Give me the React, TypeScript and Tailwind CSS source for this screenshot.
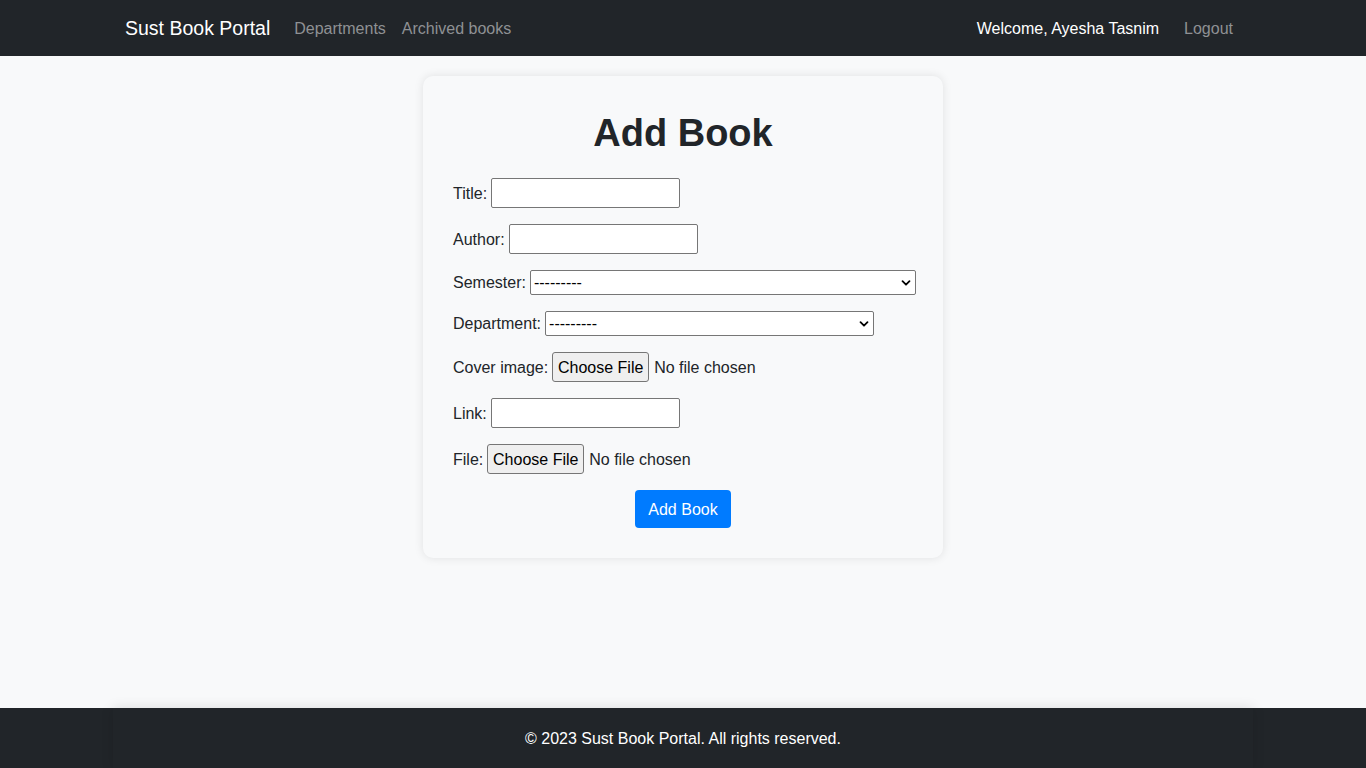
import React from 'react';

const font = { fontFamily: '"Liberation Sans", Arial, sans-serif' };

function ChevronDown() {
  return (
    <svg width="10" height="10" viewBox="0 0 10 10" className="pointer-events-none absolute right-[5px] top-1/2 -translate-y-1/2">
      <path d="M1.5 3.2 L5 6.7 L8.5 3.2" fill="none" stroke="#000" strokeWidth="1.8" strokeLinecap="round" strokeLinejoin="round" />
    </svg>
  );
}

function FilePicker() {
  return (
    <div className="flex items-center">
      <button
        type="button"
        className="h-[30px] w-[97px] pt-px bg-[#efefef] border border-[#767676] rounded-[3px] text-[16px] text-black"
      >
        Choose File
      </button>
      <span className="ml-[5px] pt-px text-[16px] text-[#212529]">No file chosen</span>
    </div>
  );
}

export default function App() {
  return (
    <div className="min-h-screen flex flex-col bg-[#f8f9fa] text-[#212529]" style={font}>
      <nav className="h-14 bg-[#212529]">
        <div className="w-[1140px] mx-auto h-full px-3 pt-[2px] flex items-center">
          <span className="text-[19.5px] text-white mr-4">Sust Book Portal</span>
          <a className="px-2 text-[16px] text-[#8f9194]">Departments</a>
          <a className="px-2 text-[16px] text-[#8f9194]">Archived books</a>
          <div className="ml-auto flex items-center">
            <span className="text-[16px] text-white mr-[17px]">Welcome, Ayesha Tasnim</span>
            <a className="px-2 text-[16px] text-[#8f9194]">Logout</a>
          </div>
        </div>
      </nav>

      <main className="flex-1 pt-5">
        <div className="w-[520px] mx-auto p-[30px] rounded-[10px] bg-[#f8f9fa] shadow-[0_0_10px_rgba(0,0,0,0.1)]">
          <h1 className="text-[38px] leading-[48px] pt-[3px] h-[48px] font-bold text-center text-[#212529] mb-6">Add Book</h1>
          <form className="text-[16px]">
            <div className="flex items-center mb-4">
              <label className="mr-[4px] pt-px">Title:</label>
              <input type="text" className="w-[189px] h-[30px] bg-white border border-[#767676] rounded-[2px]" />
            </div>
            <div className="flex items-center mb-4">
              <label className="mr-[4px] pt-px">Author:</label>
              <input type="text" className="w-[189px] h-[30px] bg-white border border-[#767676] rounded-[2px]" />
            </div>
            <div className="flex items-center mb-4">
              <label className="mr-[4px] pt-px">Semester:</label>
              <div className="relative">
                <select className="appearance-none w-[386px] h-[25px] pl-[3px] bg-white border border-[#767676] rounded-[2px] text-[16px] text-black">
                  <option>---------</option>
                </select>
                <ChevronDown />
              </div>
            </div>
            <div className="flex items-center mb-4">
              <label className="mr-[4px] pt-px">Department:</label>
              <div className="relative">
                <select className="appearance-none w-[329px] h-[25px] pl-[3px] bg-white border border-[#767676] rounded-[2px] text-[16px] text-black">
                  <option>---------</option>
                </select>
                <ChevronDown />
              </div>
            </div>
            <div className="flex items-center mb-4">
              <label className="mr-[4px] pt-px">Cover image:</label>
              <FilePicker />
            </div>
            <div className="flex items-center mb-4">
              <label className="mr-[4px] pt-px">Link:</label>
              <input type="text" className="w-[189px] h-[30px] bg-white border border-[#767676] rounded-[2px]" />
            </div>
            <div className="flex items-center mb-4">
              <label className="mr-[4px] pt-px">File:</label>
              <FilePicker />
            </div>
            <div className="flex justify-center">
              <button type="button" className="w-[96px] h-[38px] pt-px bg-[#007bff] text-white text-[16px] rounded-[4px]">
                Add Book
              </button>
            </div>
          </form>
        </div>
      </main>

      <footer className="h-[60px] bg-[#212529]">
        <div className="w-[1140px] mx-auto h-full pt-[2px] flex items-center justify-center shadow-[0_0_12px_rgba(0,0,0,0.12)]">
          <p className="text-[16px] text-white">© 2023 Sust Book Portal. All rights reserved.</p>
        </div>
      </footer>
    </div>
  );
}
